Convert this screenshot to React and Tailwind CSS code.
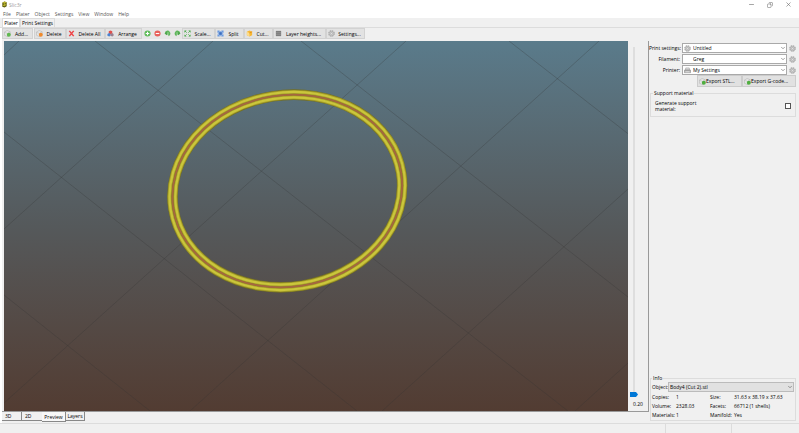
import { useState } from "react";
import { Minus, Copy, X, ChevronDown } from "lucide-react";

const menus = ["File", "Plater", "Object", "Settings", "View", "Window", "Help"];

const gridLines = [
  // falling
  [505, 0, 980, 370],
  [297, 0, 624, 256],
  [91, 0, 564, 370],
  [0, 91, 353, 370],
  [0, 254, 146, 370],
  // rising
  [0, 14, 15, 0],
  [0, 188, 209, 0],
  [0, 362, 402, 0],
  [186, 370, 595, 0],
  [378, 370, 624, 148],
  [571, 370, 624, 322],
];

function Icon({ children }) {
  return (
    <svg viewBox="0 0 16 16" className="size-[7px] shrink-0" aria-hidden="true">
      {children}
    </svg>
  );
}

function Gear() {
  return (
    <Icon>
      <circle cx="8" cy="8" r="6" fill="#d2d2d2" stroke="#a3a3a3" strokeWidth="3" strokeDasharray="3 1.7" />
      <circle cx="8" cy="8" r="5.4" fill="#cacaca" stroke="#a6a6a6" />
      <circle cx="8" cy="8" r="2" fill="#f2f2f2" stroke="#999" />
    </Icon>
  );
}

function Brick({ dot }) {
  return (
    <Icon>
      <path d="M1 5l6-4 7 3v7l-6 4-7-3z" fill="#e6e6e6" stroke="#a8a8a8" />
      <path d="M1 5l7 3 6-4M8 8v7" fill="none" stroke="#b0b0b0" />
      <circle cx="11" cy="11" r="4.5" fill={dot} />
    </Icon>
  );
}

function Rotate({ flip }) {
  return (
    <Icon>
      <g transform={flip ? "translate(16 0) scale(-1 1)" : undefined}>
        <path d="M2 7a6 6 0 0 1 11-3 6 6 0 0 1-3 10v-4H7l-2 1z" fill="#5fb55b" />
        <path d="M1 8l6-4v8z" fill="#4fa54e" />
        <path d="M7 7h4" stroke="#a5dba0" strokeWidth="2" />
      </g>
    </Icon>
  );
}

function Printer() {
  return (
    <Icon>
      <path d="M4 2h8l1 5H3z" fill="#ddd" stroke="#888" />
      <path d="M1 7h14v6H1z" fill="#a9a9a9" stroke="#777" />
      <path d="M3 11h10" stroke="#eee" strokeWidth="2" />
    </Icon>
  );
}

const icons = {
  x: (
    <Icon>
      <path d="M3 2l10 12M13 2L3 14" stroke="#ee4448" strokeWidth="3.5" />
    </Icon>
  ),
  arrange: (
    <Icon>
      <path d="M4 3l4-2 4 2v5l-4 2-4-2z" fill="#e0504c" />
      <path d="M1 9l4-2 3 2v4l-3 2-4-2z" fill="#4b83d0" />
      <path d="M8 9l4-2 3 2v4l-3 2-4-2z" fill="#9a8190" />
    </Icon>
  ),
  plus: (
    <Icon>
      <circle cx="8" cy="8" r="7" fill="#5fbb5a" />
      <path d="M8 4v8M4 8h8" stroke="#fff" strokeWidth="2.5" />
    </Icon>
  ),
  minus: (
    <Icon>
      <circle cx="8" cy="8" r="7" fill="#e8605a" />
      <path d="M4 8h8" stroke="#fff" strokeWidth="2.5" />
    </Icon>
  ),
  scale: (
    <Icon>
      <path d="M1 1h5L1 6zM15 1v5l-5-5zM1 15v-5l5 5zM15 15h-5l5-5z" fill="#43a842" />
      <path d="M3 3l3 3M13 3l-3 3M3 13l3-3M13 13l-3-3" stroke="#43a842" strokeWidth="2" />
    </Icon>
  ),
  split: (
    <Icon>
      <path d="M1 1h5v5H1zM10 1h5v5h-5zM1 10h5v5H1zM10 10h5v5h-5z" fill="#6c9be0" />
      <path d="M6 2h4v12H6zM2 6h12v4H2z" fill="#8fb2e6" />
      <path d="M5 5h6v6H5z" fill="#3c6fc0" />
    </Icon>
  ),
  cut: (
    <Icon>
      <path d="M2 4l6-3 6 3v8l-6 3-6-3z" fill="#f7b733" />
      <path d="M2 4l6 3v8l-6-3z" fill="#fbdc8c" />
      <path d="M8 7l6-3" stroke="#e58b15" strokeWidth="2" />
    </Icon>
  ),
  layers: (
    <Icon>
      <path d="M2 2h12v12H2z" fill="#7d7d7d" />
      <path d="M2 6h12M2 10h12" stroke="#a5a5a5" />
    </Icon>
  ),
};

function ToolButton({ icon, children, className }) {
  return (
    <button
      type="button"
      className={`flex h-[11px] shrink-0 items-center border border-[#d2d2d2] bg-[#e2e2e2] pl-px ${className}`}
    >
      {icon}
      <span className="flex-1 whitespace-nowrap text-center">{children}</span>
    </button>
  );
}

function RoundButton({ label, children }) {
  return (
    <button type="button" aria-label={label} className="flex h-[11px] w-[10px] shrink-0 items-center justify-center bg-[#e6e6e6]">
      {children}
    </button>
  );
}

function PresetRow({ id, label, value, icon }) {
  return (
    <div className="flex items-center">
      <label htmlFor={id} className="w-[31px] shrink-0 whitespace-nowrap text-right">
        {label}
      </label>
      <div className="relative ml-[2px] flex-1">
        <select id={id} className="block h-[10px] w-full appearance-none border border-[#a9a9a9] bg-white pl-[10px]">
          <option>{value}</option>
        </select>
        <span className="pointer-events-none absolute inset-y-0 left-[2px] flex items-center">{icon}</span>
        <ChevronDown className="pointer-events-none absolute right-px top-[2px] size-[6px] text-[#444]" />
      </div>
      <button type="button" aria-label={`Edit ${label}`} className="ml-[2px]">
        <Gear />
      </button>
    </div>
  );
}

function Viewport() {
  return (
    <div className="min-w-0 flex-1 bg-linear-to-b from-[#5a7b8b] via-[#55595b] to-[#523c32]">
      <svg viewBox="0 0 624 370" preserveAspectRatio="xMidYMid slice" className="block h-full w-full">
        <g stroke="#333" strokeOpacity="0.27">
          {gridLines.map(([x1, y1, x2, y2]) => (
            <line key={`${x1}-${y1}-${x2}`} x1={x1} y1={y1} x2={x2} y2={y2} />
          ))}
        </g>
        {/* skirt loops */}
        <g transform="translate(283.3 150) rotate(-9)" fill="none">
          <ellipse rx="115.3" ry="95.8" stroke="#75701f" strokeWidth="10.6" />
          <ellipse rx="118.2" ry="98.5" stroke="#a59f2b" strokeWidth="4" />
          <ellipse rx="112.4" ry="93.1" stroke="#a59f2b" strokeWidth="4" />
          <ellipse rx="118.2" ry="98.5" stroke="#cbc63b" strokeWidth="2.2" />
          <ellipse rx="112.4" ry="93.1" stroke="#cbc63b" strokeWidth="2.2" />
          <ellipse rx="115.3" ry="95.8" stroke="#a5663f" strokeWidth="1.8" />
        </g>
      </svg>
    </div>
  );
}

export default function App() {
  const [layer, setLayer] = useState(100);
  const [support, setSupport] = useState(false);

  return (
    <div className="flex h-screen flex-col overflow-hidden bg-[#f0f0f0] font-['Open_Sans',sans-serif] text-[5px] leading-[6px] text-black">
      {/* TITLE BAR */}
      <header className="flex h-[9px] shrink-0 items-center bg-white pl-px">
        <svg viewBox="0 0 16 16" className="size-[7px]" aria-hidden="true">
          <path d="M3 4l5-3 5 2v9l-5 3-5-2z" fill="#5d5a10" />
          <path d="M3 4l5-3 5 2-5 4zM3 10l5-3 5 1-5 4z" fill="#b9b42c" />
        </svg>
        <span className="ml-px text-[#999]">Slic3r</span>
        <div className="ml-auto flex gap-3 pr-[7px] text-[#666]">
          <button type="button" aria-label="Minimize"><Minus size={7} /></button>
          <button type="button" aria-label="Restore"><Copy size={6} className="-scale-x-100" /></button>
          <button type="button" aria-label="Close"><X size={7} /></button>
        </div>
      </header>

      <nav className="flex h-[9px] shrink-0 items-center gap-[5px] bg-white pl-[3px] text-[#555]">
        {menus.map((m) => (
          <button key={m} type="button">{m}</button>
        ))}
      </nav>

      {/* TABS */}
      <div className="flex h-[10px] shrink-0 items-end border-b border-[#dcdcdc] pl-[2px]">
        <button type="button" className="h-[9px] w-[18px] border border-b-0 border-[#dcdcdc] bg-white">Plater</button>
        <button type="button" className="h-[9px] border border-b-0 border-[#dcdcdc] px-px">Print Settings</button>
      </div>

      {/* TOOLBAR */}
      <div className="flex h-[13px] shrink-0 items-start border-l-2 border-white">
        <ToolButton icon={<Brick dot="#5fb84f" />} className="mr-px w-[31px]">Add...</ToolButton>
        <ToolButton icon={<Brick dot="#f08a2c" />} className="w-8">Delete</ToolButton>
        <ToolButton icon={icons.x} className="w-[39px]">Delete All</ToolButton>
        <ToolButton icon={icons.arrange} className="w-[37px]">Arrange</ToolButton>
        <RoundButton label="More copies">{icons.plus}</RoundButton>
        <RoundButton label="Fewer copies">{icons.minus}</RoundButton>
        <RoundButton label="Rotate left"><Rotate /></RoundButton>
        <RoundButton label="Rotate right"><Rotate flip /></RoundButton>
        <ToolButton icon={icons.scale} className="w-[33px]">Scale...</ToolButton>
        <ToolButton icon={icons.split} className="w-[29px]">Split</ToolButton>
        <ToolButton icon={icons.cut} className="w-[29px]">Cut...</ToolButton>
        <ToolButton icon={icons.layers} className="w-[53px]">Layer heights...</ToolButton>
        <ToolButton icon={<Gear />} className="w-[39px]">Settings...</ToolButton>
      </div>

      <main className="flex min-h-0 flex-1 border-l-2 border-white">
        <section className="flex min-w-0 flex-1 flex-col">
          <div className="flex min-h-0 flex-1 border-b border-r border-[#999] pl-[2px]">
            <Viewport />
            <div className="flex w-[20px] shrink-0 flex-col pt-[6px]">
              <input
                type="range"
                aria-label="Layer height"
                value={layer}
                onChange={(e) => setLayer(Number(e.target.value))}
                className="ml-[2px] min-h-0 w-2 flex-1 appearance-none bg-transparent bg-linear-to-r from-[#dedede] to-[#dedede] bg-size-[2px_100%] bg-center bg-no-repeat [writing-mode:vertical-lr] [&::-webkit-slider-thumb]:h-[5px] [&::-webkit-slider-thumb]:w-2 [&::-webkit-slider-thumb]:appearance-none [&::-webkit-slider-thumb]:bg-[#0078d7] [&::-webkit-slider-thumb]:[clip-path:polygon(0_0,75%_0,100%_50%,75%_100%,0_100%)]"
              />
              <output className="py-1 text-center">0.20</output>
            </div>
          </div>
          <div className="flex h-[11px] shrink-0 items-start text-left">
            <button type="button" className="h-[9px] w-5 border-b border-r border-[#888] pl-[3px] text-left">3D</button>
            <button type="button" className="h-[9px] w-5 border-b border-[#888] pl-[3px] text-left">2D</button>
            <button type="button" className="h-[10px] w-6 border-b border-r border-[#888] bg-[#f8f8f8] pt-px text-center">Preview</button>
            <button type="button" className="h-[9px] w-[19px] border-b border-r border-[#888] text-center">Layers</button>
          </div>
        </section>

        {/* SIDE PANEL */}
        <aside className="flex w-[150px] shrink-0 flex-col pr-[3px] pb-[2px]">
          <div className="flex flex-col gap-px pt-[2px]">
            <PresetRow id="print" label="Print settings:" value="Untitled" icon={<Gear />} />
            <PresetRow id="filament" label="Filament:" value="Greg" />
            <PresetRow id="printer" label="Printer:" value="My Settings" icon={<Printer />} />
          </div>
          <div className="flex justify-end">
            <button type="button" className="flex h-3 w-[45px] items-center border border-[#ccc] bg-[#e1e1e1] pl-px">
              <Brick dot="#4fae3f" />
              Export STL...
            </button>
            <button type="button" className="flex h-3 w-[54px] items-center border border-[#ccc] bg-[#e1e1e1] pl-px">
              <Brick dot="#4fae3f" />
              Export G-code...
            </button>
          </div>

          <fieldset className="ml-px mt-[3px] border border-[#dcdcdc] px-1 pb-1">
            <legend className="-ml-[2px] px-px">Support material</legend>
            <div className="flex items-center justify-between pt-[4px]">
              <label htmlFor="support" className="w-[45px]">Generate support material:</label>
              <input
                id="support"
                type="checkbox"
                checked={support}
                onChange={(e) => setSupport(e.target.checked)}
                className="size-[6px] appearance-none border border-[#555] bg-white checked:bg-[#0078d7]"
              />
            </div>
          </fieldset>

          <fieldset className="ml-px mt-auto border border-[#dcdcdc] px-px">
            <legend className="px-px">Info</legend>
            <div className="flex items-center pt-px">
              <label htmlFor="object" className="w-4 shrink-0">Object:</label>
              <div className="relative flex-1">
                <select id="object" className="block h-[10px] w-full appearance-none border border-[#bbb] bg-[#e1e1e1] pl-px">
                  <option>Body4 (Cut 2).stl</option>
                </select>
                <ChevronDown className="pointer-events-none absolute right-px top-[2px] size-[6px] text-[#444]" />
              </div>
            </div>
            <dl className="grid grid-cols-[24px_34px_24px_1fr] whitespace-nowrap pt-px leading-[9px]">
              <dt>Copies:</dt><dd>1</dd>
              <dt>Size:</dt><dd>31.63 x 38.19 x 37.63</dd>
              <dt>Volume:</dt><dd>2328.03</dd>
              <dt>Facets:</dt><dd>66712 (1 shells)</dd>
              <dt>Materials:</dt><dd>1</dd>
              <dt>Manifold:</dt><dd>Yes</dd>
            </dl>
          </fieldset>
        </aside>
      </main>

      {/* STATUS BAR */}
      <footer className="flex h-[10px] shrink-0 justify-end border-t border-[#dcdcdc]">
        <div className="w-[66px] border-l border-[#dcdcdc]" />
        <div className="w-[68px] border-l border-[#dcdcdc]" />
      </footer>
    </div>
  );
}
